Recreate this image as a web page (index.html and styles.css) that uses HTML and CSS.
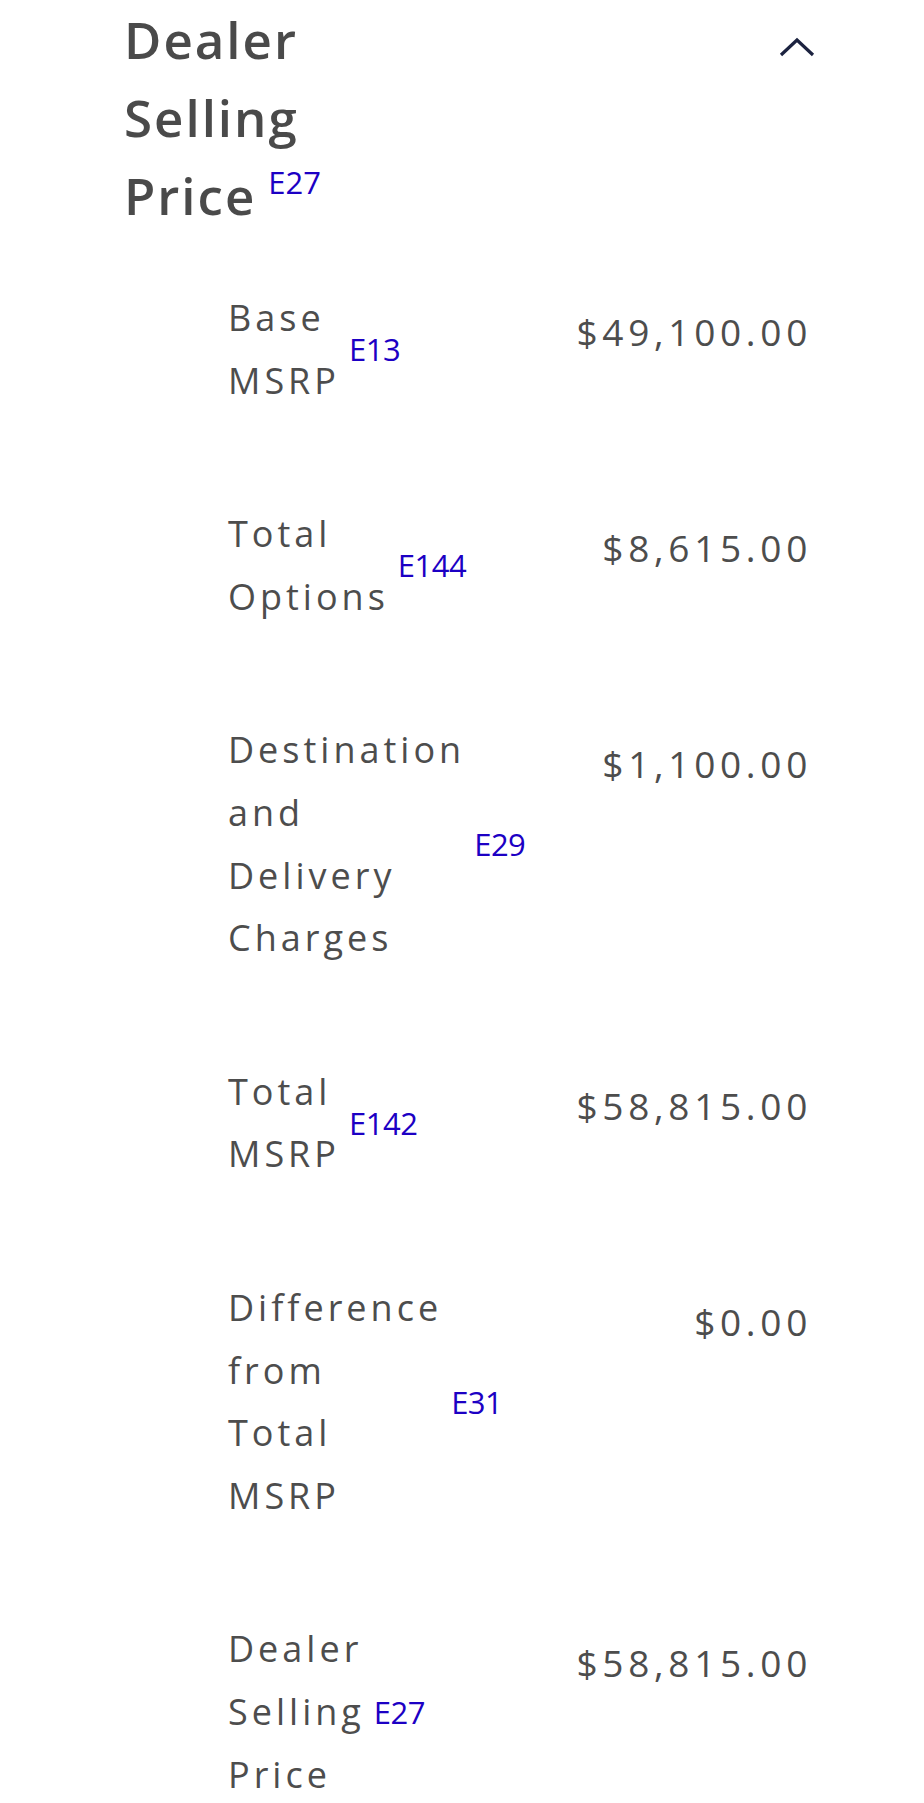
FILE: index.html
```html
<!DOCTYPE html>
<html lang="en">
<head>
<meta charset="utf-8">
<title>Dealer Selling Price</title>
<link rel="stylesheet" href="styles.css">
</head>
<body>
<section class="accordion">
  <header class="acc-head">
    <h2 class="acc-title">Dealer Selling Price<sup class="note note-head">E27</sup></h2>
    <button class="acc-toggle" type="button" aria-label="Collapse">
      <svg width="36" height="20" viewBox="0 0 36 20" aria-hidden="true">
        <path d="M2 18 L18 3 L34 18" fill="none" stroke="#1c2340" stroke-width="3.2" stroke-linejoin="miter"/>
      </svg>
    </button>
  </header>
  <dl class="rows">
    <div class="row">
      <dt class="label-group"><span class="label">Base MSRP</span><sup class="note">E13</sup></dt>
      <dd class="value">$49,100.00</dd>
    </div>
    <div class="row">
      <dt class="label-group"><span class="label">Total Options</span><sup class="note">E144</sup></dt>
      <dd class="value">$8,615.00</dd>
    </div>
    <div class="row">
      <dt class="label-group"><span class="label">Destination and Delivery Charges</span><sup class="note">E29</sup></dt>
      <dd class="value">$1,100.00</dd>
    </div>
    <div class="row">
      <dt class="label-group"><span class="label">Total MSRP</span><sup class="note">E142</sup></dt>
      <dd class="value">$58,815.00</dd>
    </div>
    <div class="row">
      <dt class="label-group"><span class="label">Difference from Total MSRP</span><sup class="note">E31</sup></dt>
      <dd class="value">$0.00</dd>
    </div>
    <div class="row">
      <dt class="label-group"><span class="label">Dealer Selling Price</span><sup class="note">E27</sup></dt>
      <dd class="value">$58,815.00</dd>
    </div>
  </dl>
</section>
</body>
</html>
```

FILE: styles.css
```css
html, body {
  margin: 0;
  padding: 0;
  background: #ffffff;
}

body {
  font-family: "Open Sans", "Noto Sans", sans-serif;
  color: #4d4d4d;
}

.accordion {
  padding: 0 109px 0 124px;
}

.acc-head {
  display: flex;
  justify-content: space-between;
  align-items: flex-start;
}

.acc-title {
  margin: 0;
  width: min-content;
  font-size: 51px;
  line-height: 78px;
  font-weight: 600;
  letter-spacing: 2px;
  color: #4a4a4a;
}

.note {
  font-family: "Open Sans", "Noto Sans", sans-serif;
  font-size: 31px;
  line-height: 1;
  font-weight: 400;
  letter-spacing: -0.5px;
  color: #1c00c4;
}

.note-head {
  vertical-align: 21px;
  margin-left: 12px;
  letter-spacing: 0;
}

.acc-toggle {
  margin: 37px 0 0 0;
  padding: 0;
  border: 0;
  background: none;
  display: flex;
  line-height: 0;
}

.rows {
  margin: 8px 0 0 0;
  padding: 0 3px 0 104px;
}

.row {
  display: flex;
  justify-content: space-between;
  align-items: flex-start;
  padding: 45px 0 46px;
}

.label-group {
  display: flex;
  align-items: center;
  gap: 9px;
}

.label {
  width: min-content;
  font-size: 36px;
  line-height: 62.6px;
  letter-spacing: 4px;
  color: #4d4d4d;
}

.value {
  margin: 0;
  padding-top: 14px;
  font-size: 37px;
  line-height: 62.6px;
  letter-spacing: 4.7px;
  color: #4d4d4d;
}
```
